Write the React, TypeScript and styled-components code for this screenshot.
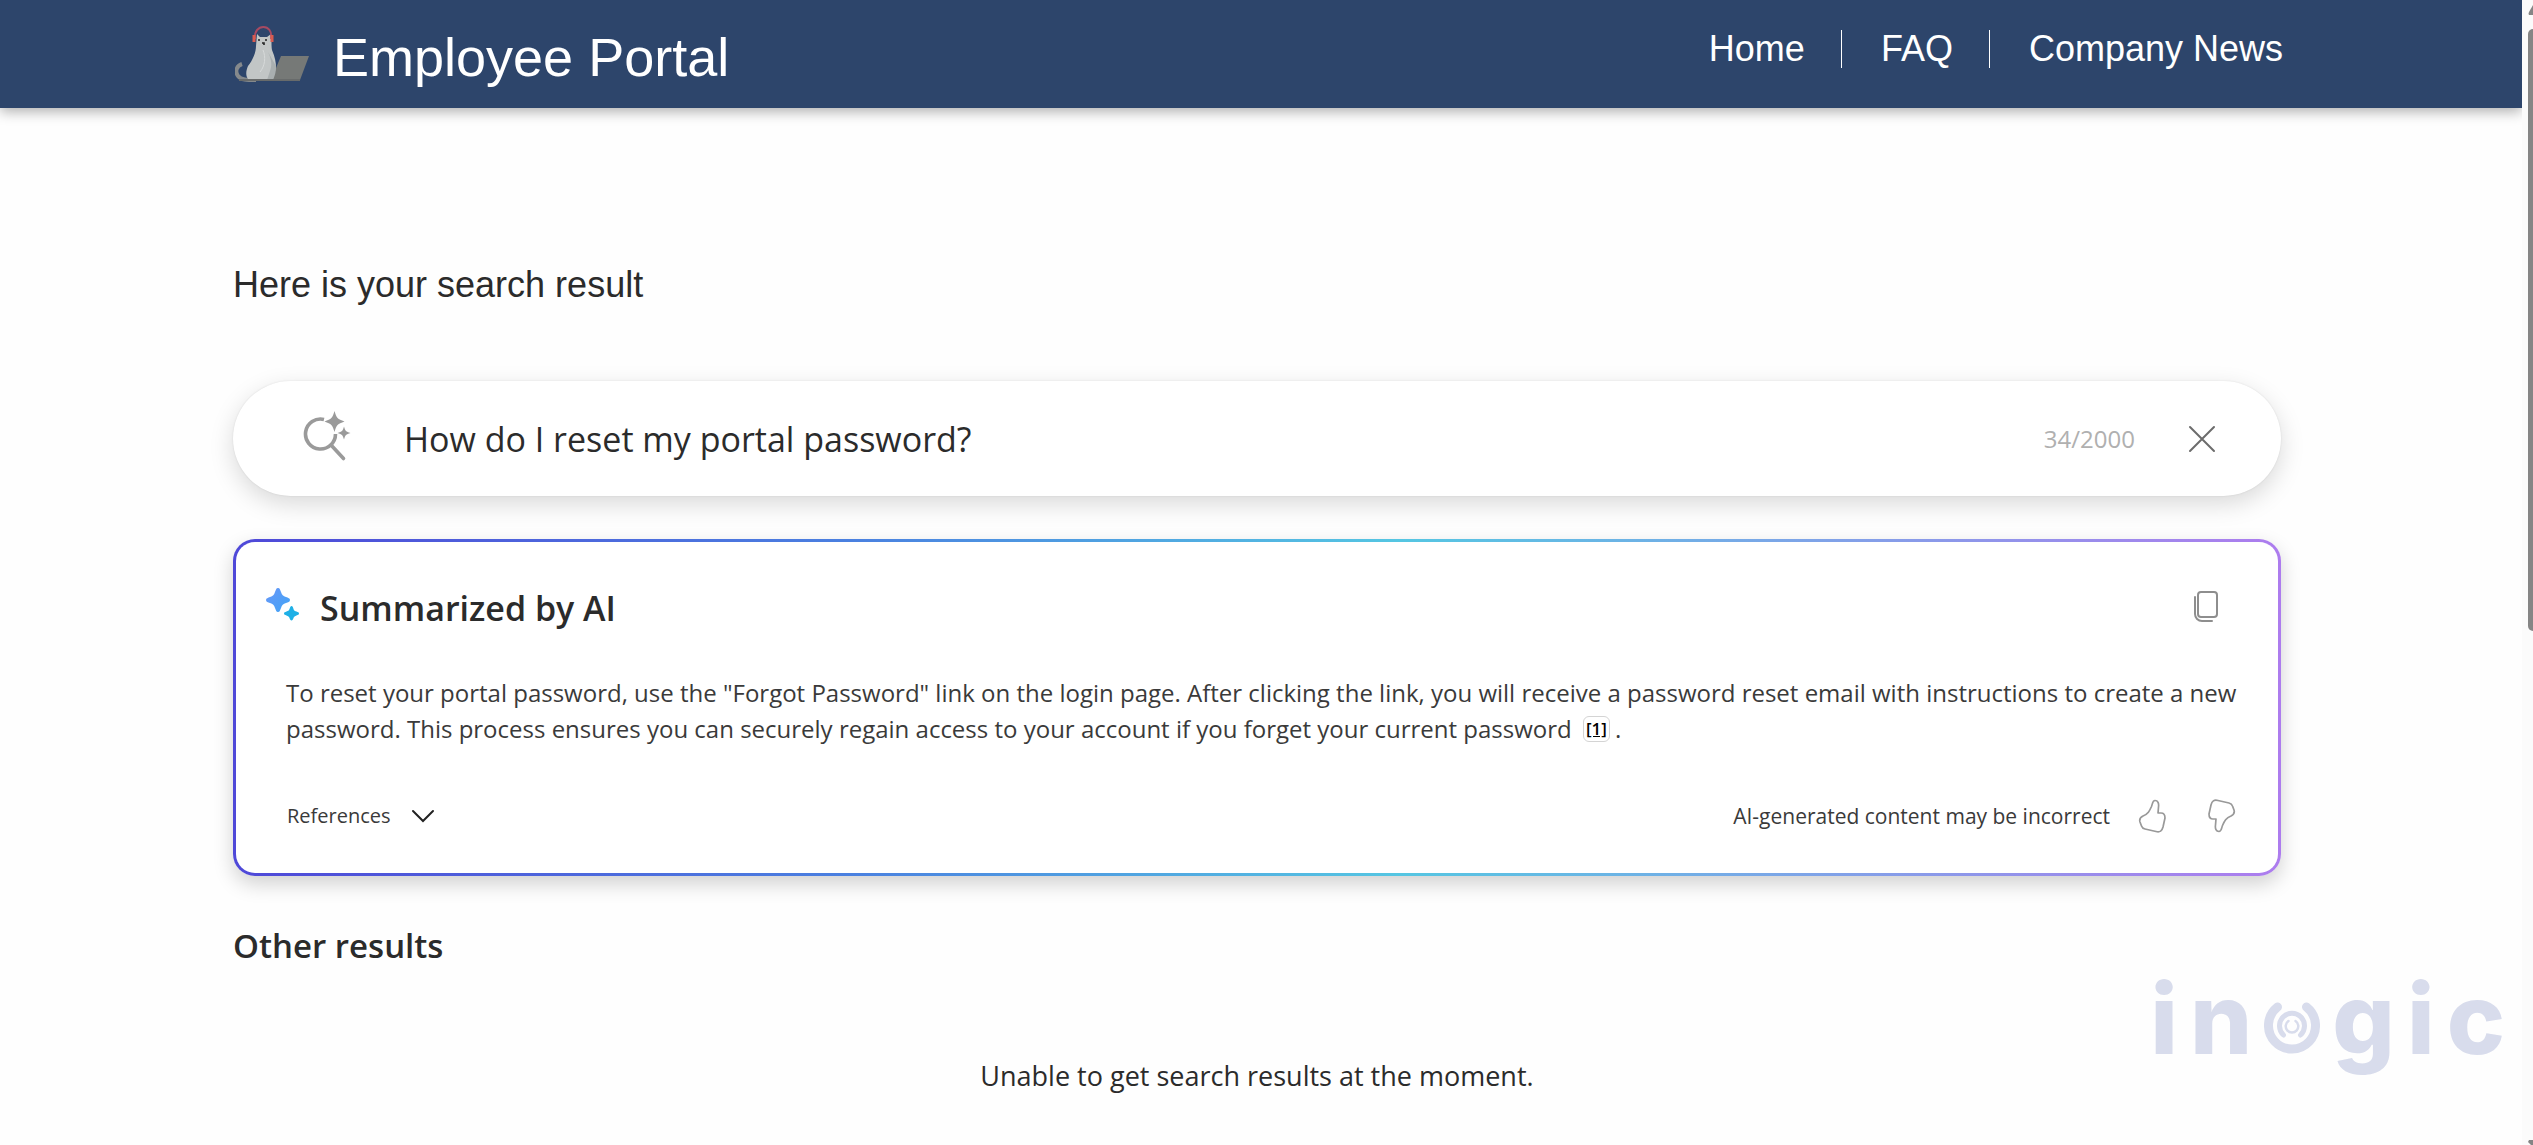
import React from "react";
import styled, { createGlobalStyle } from "styled-components";

const ui = `"Open Sans", "Noto Sans", sans-serif`;
const arial = `"Liberation Sans", Arial, sans-serif`;

const GlobalStyle = createGlobalStyle`
  *, *::before, *::after { box-sizing: border-box; }
  html, body { margin: 0; background: #fefefe; }
  body { font-family: ${ui}; color: #2b2b2b; overflow: hidden; }
  h1, h2, p { margin: 0; }
`;

const Shell = styled.div`
  display: flex;
  height: 100vh;
`;

const Page = styled.div`
  position: relative;
  flex: 1;
  min-width: 0;
  overflow: hidden;
`;

const Header = styled.header`
  display: flex;
  justify-content: space-between;
  align-items: flex-start;
  height: 108px;
  padding: 0 239px 0 235px;
  background: #2d456b;
  box-shadow: 0 4px 12px rgba(0, 0, 0, 0.3);
  font-family: ${arial};
`;

const Brand = styled.a`
  display: flex;
  align-items: center;
  gap: 22px;
  padding-top: 26px;
  color: #fff;
  font-size: 54px;
  line-height: 62px;
  text-decoration: none;
`;

const Nav = styled.nav`
  display: flex;
  padding-top: 30px;
`;

const NavLink = styled.a`
  padding: 0 36px;
  color: #fff;
  font-size: 36px;
  line-height: 38px;
  text-decoration: none;

  & + & {
    padding-left: 39px;
    border-left: 1px solid #fff;
  }
  &:last-child { padding-right: 0; }
`;

const Main = styled.main`
  display: flex;
  flex-direction: column;
  padding: 156px 241px 0 233px;
`;

const PageTitle = styled.h1`
  font: 400 36px/42px ${arial};
`;

const SearchBox = styled.form`
  display: flex;
  align-items: center;
  height: 115px;
  margin-top: 75px;
  padding: 0 64px 0 70px;
  border-radius: 58px;
  background: #fff;
  box-shadow: 0 8px 24px rgba(0, 0, 0, 0.15), 0 0 2px rgba(0, 0, 0, 0.1);
`;

const SearchInput = styled.input`
  flex: 1;
  min-width: 0;
  margin-left: 53px;
  padding: 0;
  border: 0;
  outline: 0;
  background: none;
  color: #2b2b2b;
  font: 400 34px/48px ${ui};
`;

const Counter = styled.span`
  margin-right: 52px;
  color: #b0b0b0;
  font-size: 24px;
  line-height: 32px;
`;

const IconButton = styled.button`
  display: flex;
  padding: 0;
  border: 0;
  background: none;
  color: #8e8e8e;
  cursor: pointer;
`;

const Card = styled.section`
  margin-top: 43px;
  padding: 42px 36px 40px 28px;
  border: 3px solid transparent;
  border-radius: 22px;
  background:
    linear-gradient(#fff, #fff) padding-box,
    linear-gradient(90deg, #4f48d8 0%, #4a80e0 30%, #55c6e2 57%, #ad7cee 100%) border-box;
  box-shadow: 0 8px 20px rgba(0, 0, 0, 0.18);
`;

const CardHead = styled.div`
  display: flex;
  align-items: center;
  gap: 20px;
  padding-right: 23px;

  & > :last-child { margin-left: auto; }
`;

const Heading = styled.h2<{ $size: number }>`
  font-size: ${(p) => p.$size}px;
  font-weight: 600;
  line-height: 48px;
`;

const Answer = styled.p`
  margin-top: 43px;
  padding-left: 22px;
  color: #3a3a3a;
  font-size: 24px;
  line-height: 36px;
`;

const Citation = styled.a`
  display: inline-block;
  margin: 0 5px;
  padding: 0 2px;
  border: 1px solid #d4d4d4;
  border-radius: 6px;
  color: #000;
  font-size: 17px;
  font-weight: 600;
  line-height: 24px;
  vertical-align: 3px;
`;

const CardFoot = styled.div`
  display: flex;
  align-items: center;
  justify-content: space-between;
  margin-top: 52px;
  padding: 0 6px 0 23px;
  color: #3a3a3a;
  font-size: 21px;
  line-height: 32px;
`;

const ReferencesButton = styled.button`
  display: flex;
  align-items: center;
  gap: 20px;
  padding: 0;
  border: 0;
  background: none;
  color: inherit;
  font: 400 20px/32px ${ui};
`;

const Feedback = styled.div`
  display: flex;
  align-items: center;
`;

const ThumbButton = styled(IconButton)<{ $gap: number }>`
  margin-left: ${(p) => p.$gap}px;
`;

const OtherResults = styled.section`
  margin-top: 46px;
`;

const EmptyMessage = styled.p`
  margin-top: 86px;
  font-size: 27px;
  line-height: 40px;
  text-align: center;
`;

const Watermark = styled.div`
  position: absolute;
  right: 17px;
  bottom: 66px;
  display: flex;
  align-items: baseline;
  gap: 12px;
  color: #d8dcec;
  font: 800 98px/120px Inter, sans-serif;
`;

const ScrollTrack = styled.div`
  display: flex;
  flex-direction: column;
  justify-content: space-between;
  align-items: flex-end;
  width: 11px;
  padding-top: 5px;
  overflow: hidden;
  background: #fbfbfb;
  color: #858585;
`;

const ScrollThumb = styled.div`
  width: 5px;
  height: 602px;
  margin: 14px 0 auto;
  border-radius: 6px 0 0 6px;
  background: #858585;
`;

const CatLogo = () => (
  <svg width="76" height="62" viewBox="0 0 76 62" aria-hidden="true">
    <path d="M7 38C1 40 0 46 3 50c3 4 9 4 18 4" fill="none" stroke="#85898c" strokeWidth="4" />
    <path d="M46 30h28l-9 24H36z" fill="#767977" />
    <path d="M22 8l3 3h7l4-3c1 5 0 10 1 16 3 7 4 12 4 18-1 5-4 8-5 12H14c-4-4-3-9-1-14 5-6 8-14 8-20z" fill="#c2c6c6" />
    <path d="M33 26c4 8 4 14 2 19l-3 9h6c2-5 3-8 3-14z" fill="#a9afb0" />
    <path d="M28 24c3 7 2 16-3 22" fill="none" stroke="#d7dada" strokeWidth="1" />
    <path d="M20 13C18-3 39-3 36 13" fill="none" stroke="#a64a62" strokeWidth="2" />
    <path d="M19 9v7M37 9v7" stroke="#d95c50" strokeWidth="3" />
    <path d="M23 14h2M30 14h2M27 17h2v2" fill="none" stroke="#222" strokeWidth="1.600" />
    <path d="M4 54h61" stroke="#686b6b" strokeWidth="2" />
  </svg>
);

const SearchSparkIcon = () => (
  <svg width="48" height="56" viewBox="0 0 48 56" fill="#9a9a9a" aria-hidden="true">
    <path d="M21 8.400A15 15 0 1 0 32.500 23" fill="none" stroke="#9a9a9a" strokeWidth="3.600" />
    <path d="M28 34l12.500 13.500" fill="none" stroke="#9a9a9a" strokeWidth="3.600" strokeLinecap="round" />
    <path d="M31.500 0C33.500 7 34.500 8 41.500 10.500C34.500 13 33.500 14 31.500 21C29.500 14 28.500 13 21.500 10.500C28.500 8 29.500 7 31.500 0z" />
    <path d="M41 15.500C42.300 20 43 20.700 47.500 22C43 23.300 42.300 24 41 28.500C39.700 24 39 23.300 34.500 22C39 20.700 39.700 20 41 15.500z" />
  </svg>
);

const CloseIcon = () => (
  <svg width="30" height="30" viewBox="0 0 30 30" stroke="#6c6c6c" strokeWidth="2" strokeLinecap="round" aria-hidden="true">
    <path d="M3 3l24 24M27 3L3 27" />
  </svg>
);

const SparkleIcon = () => (
  <svg width="36" height="42" viewBox="-1 0 36 42" aria-hidden="true">
    <defs>
      <linearGradient id="spark" x1="0" y1="0" x2="1" y2="1">
        <stop offset="0" stopColor="#6a97f8" />
        <stop offset="1" stopColor="#3fa4f6" />
      </linearGradient>
    </defs>
    <path d="M13 1c2 0 2 2 3 4 1 3 2 4 5 5 2 1 4 1 4 3s-2 2-4 3c-3 1-4 2-5 5-1 2-1 4-3 4s-2-2-3-4c-1-3-2-4-5-5-2-1-4-1-4-3s2-2 4-3c3-1 4-2 5-5 1-2 1-4 3-4z" fill="url(#spark)" />
    <path d="M26.500 19c1 0 1.500 1 2 3s1.500 2 3 2.500 2.500 1 2.500 2-1 1.500-2.500 2-2.500 1-3 2.500-1 2.500-2 2.500-1.500-1-2-2.500-1.500-2-3-2.500-2.500-1-2.500-2 1-1.500 2.500-2 2.500-1 3-2.500 1-3 2-3z" fill="#1fb0e6" />
  </svg>
);

const CopyIcon = () => (
  <svg width="26" height="34" viewBox="0 0 26 34" fill="none" stroke="currentColor" strokeWidth="2" strokeLinecap="round" aria-hidden="true">
    <rect x="5" y="1" width="19" height="25" rx="3" />
    <path d="M2 6v17a7 7 0 0 0 7 7h10" />
  </svg>
);

const ChevronIcon = () => (
  <svg width="24" height="14" viewBox="0 0 24 14" fill="none" stroke="#222" strokeWidth="2" strokeLinecap="round" aria-hidden="true">
    <path d="M2 2l10 10L22 2" />
  </svg>
);

const ThumbIcon = ({ down = false }: { down?: boolean }) => (
  <svg width="28" height="34" viewBox="0 0 28 34" fill="none" stroke="#999" strokeWidth="1.700" strokeLinejoin="round" aria-hidden="true">
    <path
      transform={down ? "rotate(180 14 17)" : undefined}
      d="M17 1.500c3 0 4 3 3.500 6.500L20 14h3c3 0 4 2 4 5l-2 9c-1 4-3 5.500-7 4.500L7 30c-2-.5-3-1.500-3.500-3L2 23c-.8-2.500 0-4.500 3-6 5-2 6.500-5 8.500-9.500C14.500 5 14.500 1.500 17 1.500z"
    />
  </svg>
);

const OrbitIcon = () => (
  <svg width="56" height="53" viewBox="0 0 56 53" fill="none" stroke="currentColor" strokeLinecap="round" aria-hidden="true">
    <path d="M13.500 6A23.500 23.500 0 1 0 42.500 6" strokeWidth="9" />
    <path d="M19.500 34A12.500 12.500 0 1 1 36.500 34" strokeWidth="5" />
    <path d="M24.500 20A6.300 6.300 0 1 0 31.500 20" strokeWidth="2.500" />
  </svg>
);

const nav = ["Home", "FAQ", "Company News"];

export default function App() {
  return (
    <>
      <GlobalStyle />
      <Shell>
        <Page>
          <Header>
            <Brand href="#">
              <CatLogo />
              <span>Employee Portal</span>
            </Brand>
            <Nav>
              {nav.map((item) => (
                <NavLink key={item} href="#">{item}</NavLink>
              ))}
            </Nav>
          </Header>

          <Main>
            <PageTitle>Here is your search result</PageTitle>

            <SearchBox role="search">
              <SearchSparkIcon />
              <SearchInput aria-label="Search" defaultValue="How do I reset my portal password?" />
              <Counter>34/2000</Counter>
              <IconButton type="button" aria-label="Clear"><CloseIcon /></IconButton>
            </SearchBox>

            <Card>
              <CardHead>
                <SparkleIcon />
                <Heading $size={34}>Summarized by AI</Heading>
                <IconButton type="button" aria-label="Copy"><CopyIcon /></IconButton>
              </CardHead>
              <Answer>
                To reset your portal password, use the "Forgot Password" link on the login page. After clicking the
                link, you will receive a password reset email with instructions to create a new password. This
                process ensures you can securely regain access to your account if you forget your current
                password <Citation href="#">[1]</Citation>.
              </Answer>
              <CardFoot>
                <ReferencesButton type="button">
                  References
                  <ChevronIcon />
                </ReferencesButton>
                <Feedback>
                  AI-generated content may be incorrect
                  <ThumbButton $gap={28} type="button" aria-label="Like"><ThumbIcon /></ThumbButton>
                  <ThumbButton $gap={42} type="button" aria-label="Dislike"><ThumbIcon down /></ThumbButton>
                </Feedback>
              </CardFoot>
            </Card>

            <OtherResults>
              <Heading $size={33}>Other results</Heading>
              <EmptyMessage>Unable to get search results at the moment.</EmptyMessage>
            </OtherResults>
          </Main>

          <Watermark>
            <span>i</span>
            <span>n</span>
            <OrbitIcon />
            <span>g</span>
            <span>i</span>
            <span>c</span>
          </Watermark>
        </Page>

        <ScrollTrack aria-hidden="true">
          <svg width="5" height="10" viewBox="0 0 5 10" fill="currentColor"><path d="M5 0v10H1Q0 9 1 7z" /></svg>
          <ScrollThumb />
          <svg width="5" height="5" viewBox="0 0 5 5" fill="currentColor"><path d="M1 0h4v5H3L0 2z" /></svg>
        </ScrollTrack>
      </Shell>
    </>
  );
}
